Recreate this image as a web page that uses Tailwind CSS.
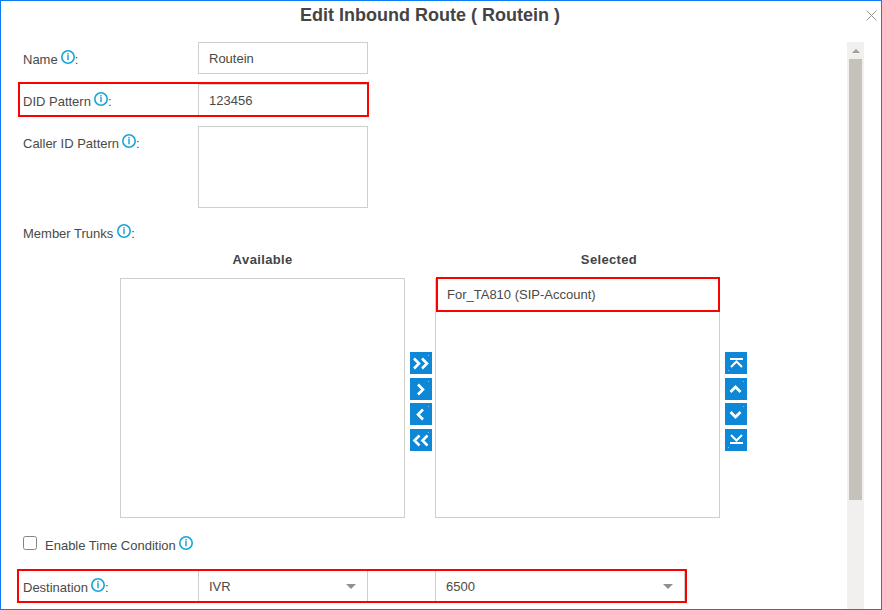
<!DOCTYPE html>
<html lang="en">
<head>
<meta charset="utf-8">
<title>Edit Inbound Route</title>
<script src="https://cdn.jsdelivr.net/npm/@tailwindcss/browser@4"></script>
</head>
<body class="bg-white">
<svg class="hidden">
  <symbol id="info" viewBox="0 0 14 14"><circle cx="7" cy="7" r="6.200" fill="none" stroke="#19a5d6" stroke-width="1.6"/><path d="M7 3v1.500M7 4.900v5.300" stroke="#3fb0d8" stroke-width="1.700" fill="none"/></symbol>
</svg>
<div class="relative flex h-[610px] w-[882px] flex-col overflow-hidden border border-[#0a7cf4] font-['Liberation_Sans',Arial,sans-serif] text-[13px] leading-[16px] text-[#4a4a45]">
  <header class="relative flex h-[41px] shrink-0 justify-center pt-[4px] pr-[22px]">
    <h1 class="text-[18px] leading-[20px] font-bold text-[#444]">Edit Inbound Route ( Routein )</h1>
    <button class="absolute top-[9px] right-[4px] h-[11px] w-[11px]"><svg class="block" width="11" height="11" viewBox="0 0 11 11"><path d="M.5.5l10 10M10.5.5l-10 10" stroke="#96968e" stroke-width="1"/></svg></button>
  </header>
  <div class="flex min-h-0 flex-1">
    <main class="w-[846px] pl-[22px]">
      <div class="flex h-[32px]">
        <div class="flex w-[175px] pt-[10px]">Name<svg class="-mt-[2px] ml-[3px] h-[14px] w-[14px]"><use href="#info"/></svg>:</div>
        <div class="w-[170px] border border-[#d0cfca] pt-[8px] pl-[10px]">Routein</div>
      </div>
      <div class="mt-[10px] flex h-[32px]">
        <div class="flex w-[175px] pt-[10px]">DID Pattern<svg class="-mt-[2px] ml-[3px] h-[14px] w-[14px]"><use href="#info"/></svg>:</div>
        <div class="w-[170px] border border-[#d0cfca] pt-[8px] pl-[10px]">123456</div>
      </div>
      <div class="mt-[10px] flex h-[82px]">
        <div class="flex w-[175px] pt-[10px]">Caller ID Pattern<svg class="-mt-[2px] ml-[3px] h-[14px] w-[14px]"><use href="#info"/></svg>:</div>
        <div class="w-[170px] border border-[#d0cfca]"></div>
      </div>
      <div class="mt-[8px] flex h-[34px] pt-[10px]">Member Trunks<svg class="-mt-[2px] ml-[4px] h-[14px] w-[14px]"><use href="#info"/></svg>:</div>
      <div class="flex h-[28px] pt-[2px] pl-[97px] text-center font-bold text-[#444]">
        <div class="w-[285px] tracking-[0.35px] [font-kerning:none]">Available</div>
        <div class="ml-[61px] w-[285px] pl-px tracking-[0.35px] [font-kerning:none]">Selected</div>
      </div>
      <div class="flex h-[240px] pl-[97px]">
        <div class="w-[285px] border border-[#d0cfca]"></div>
        <div class="ml-[5px] flex w-[22px] flex-col gap-[4px] pt-[74px]">
          <button class="h-[22px] bg-[#0d87d6]"><svg class="block" width="22" height="22" fill="none" stroke="#fff" stroke-width="2.600"><path d="M4 6.500l5 5-5 5M12 6.500l5 5-5 5"/><path d="M18 3.500h1" stroke="#86c3eb" stroke-width="1"/></svg></button>
          <button class="h-[22px] bg-[#0d87d6]"><svg class="block" width="22" height="22" fill="none" stroke="#fff" stroke-width="2.600"><path d="M8 6.500l5 5-5 5"/><path d="M18 3.500h1" stroke="#86c3eb" stroke-width="1"/></svg></button>
          <button class="-mt-px h-[22px] bg-[#0d87d6]"><svg class="block" width="22" height="22" fill="none" stroke="#fff" stroke-width="2.600"><path d="M13 6.500l-5 5 5 5"/><path d="M18 3.500h1" stroke="#86c3eb" stroke-width="1"/></svg></button>
          <button class="h-[22px] bg-[#0d87d6]"><svg class="block" width="22" height="22" fill="none" stroke="#fff" stroke-width="2.600"><path d="M9.500 6.500l-5 5 5 5M17.500 6.500l-5 5 5 5"/><path d="M18 3.500h1" stroke="#86c3eb" stroke-width="1"/></svg></button>
        </div>
        <div class="ml-[3px] w-[285px] border border-[#d0cfca] pt-[8px] pl-[11px]">For_TA810 (SIP-Account)</div>
        <div class="ml-[5px] flex w-[22px] flex-col gap-[4px] pt-[74px]">
          <button class="h-[22px] bg-[#0d87d6]"><svg class="block" width="22" height="22" fill="none" stroke="#fff" stroke-width="2"><path d="M5 7h13M6 15l5.500-5.500 5.500 5.500"/><path d="M3 18.500h1" stroke="#86c3eb" stroke-width="1"/></svg></button>
          <button class="h-[22px] bg-[#0d87d6]"><svg class="block" width="22" height="22" fill="none" stroke="#fff" stroke-width="2.700"><path d="M5.500 14l5-5 5 5"/><path d="M18 3.500h1" stroke="#86c3eb" stroke-width="1"/></svg></button>
          <button class="-mt-px h-[22px] bg-[#0d87d6]"><svg class="block" width="22" height="22" fill="none" stroke="#fff" stroke-width="2.700"><path d="M5.500 9l5 5 5-5"/><path d="M18 3.500h1" stroke="#86c3eb" stroke-width="1"/></svg></button>
          <button class="h-[22px] bg-[#0d87d6]"><svg class="block" width="22" height="22" fill="none" stroke="#fff" stroke-width="2"><path d="M5 14h13M6 6l5.500 5.500 5.500-5.500"/><path d="M3 18.500h1" stroke="#86c3eb" stroke-width="1"/></svg></button>
        </div>
      </div>
      <div class="flex h-[52px] pt-[20px]">
        <span class="-mt-[2px] mr-[8px] h-[14px] w-[14px] rounded-[2.500px] border-[1.500px] border-[#85857f] bg-white"></span>Enable Time Condition<svg class="-mt-[2px] ml-[3px] h-[14px] w-[14px]"><use href="#info"/></svg>
      </div>
      <div class="flex h-[32px]">
        <div class="flex w-[175px] pt-[10px]">Destination<svg class="-mt-[2px] ml-[3px] h-[14px] w-[14px]"><use href="#info"/></svg>:</div>
        <div class="flex w-[170px] justify-between border border-[#d0cfca] pt-[8px] pr-[11px] pl-[10px]">IVR<svg class="mt-[5px]" width="10" height="5"><path d="M0 0h10L5 5z" fill="#91918a"/></svg></div>
        <div class="ml-[67px] flex w-[250px] justify-between border border-[#d0cfca] pt-[8px] pr-[11px] pl-[10px]">6500<svg class="mt-[5px]" width="10" height="5"><path d="M0 0h10L5 5z" fill="#91918a"/></svg></div>
      </div>
    </main>
    <div class="flex w-[17px] flex-col items-center bg-[#f1f0ee]">
      <svg class="mt-[7px] mb-[6px] shrink-0" width="8" height="4"><path d="M0 4L4 0l4 4z" fill="#a09e98"/></svg>
      <div class="h-[441px] w-[13px] bg-[#c5c2bb]"></div>
    </div>
  </div>
  <div class="absolute top-[81px] left-[17px] h-[35px] w-[351px] border-2 border-[#f00]"></div>
  <div class="absolute top-[276px] left-[435px] h-[35px] w-[284px] border-2 border-[#f00]"></div>
  <div class="absolute top-[568px] left-[16px] h-[34px] w-[670px] border-2 border-[#f00]"></div>
</div>
</body>
</html>
